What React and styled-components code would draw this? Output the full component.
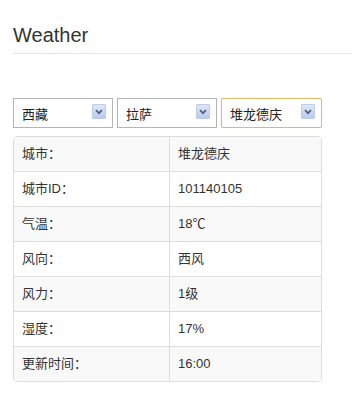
import React from 'react';
import styled, { createGlobalStyle } from 'styled-components';

const GlobalStyle = createGlobalStyle`
  html, body {
    margin: 0;
    padding: 0;
    background: #fff;
  }
  body {
    font-family: "Liberation Sans", Arial, "Noto Sans CJK SC", sans-serif;
    font-size: 13px;
    color: #333;
  }
`;

const Page = styled.div`
  padding: 20px 0 0 13px;
  width: 339px;
`;

const Header = styled.h2`
  margin: 0;
  padding-bottom: 3px;
  font-size: 20px;
  line-height: 30px;
  font-weight: normal;
  color: #333;
  border-bottom: 1px solid #e5e5e5;
`;

const SelectRow = styled.div`
  display: flex;
  gap: 4px;
  margin-top: 44px;
  margin-bottom: 8px;
`;

const SelectBox = styled.div`
  position: relative;
  box-sizing: border-box;
  width: ${(p) => p.w}px;
  height: 30px;
  border: 1px solid ${(p) => (p.focused ? '#dcbc6a' : '#b4b4b4')};
  border-radius: ${(p) => (p.focused ? '2px' : '0')};
  box-shadow: ${(p) => (p.focused ? '0 0 1px rgba(220,180,90,0.6)' : 'none')};
  background: #fff;
  display: flex;
  align-items: center;
  padding-left: 8px;
  font-size: 13px;
  color: #222;
`;

const Arrow = styled.span`
  position: absolute;
  right: 6px;
  top: 5px;
  width: 14px;
  height: 15px;
  box-sizing: border-box;
  border: 1px solid #bccbe8;
  border-radius: 1px;
  background: linear-gradient(#dfe7f7, #b9cbef);
  display: flex;
  align-items: center;
  justify-content: center;
`;

const Table = styled.div`
  box-sizing: border-box;
  width: 309px;
  border: 1px solid #dddddd;
  border-radius: 4px;
  overflow: hidden;
`;

const Row = styled.div`
  display: grid;
  grid-template-columns: 155px 1fr;
  background: ${(p) => (p.striped ? '#f9f9f9' : '#fff')};
  border-top: ${(p) => (p.first ? 'none' : '1px solid #dddddd')};
`;

const Cell = styled.div`
  padding: 8px 8px;
  line-height: 18px;
  font-size: 13px;
  color: #333;
  border-left: ${(p) => (p.divider ? '1px solid #dddddd' : 'none')};
`;

function Select({ value, w, focused }) {
  return (
    <SelectBox w={w} focused={focused}>
      {value}
      <Arrow>
        <svg width="8" height="6" viewBox="0 0 8 6">
          <path d="M1 1.2 L4 4.2 L7 1.2" fill="none" stroke="#4d6185" strokeWidth="1.8" />
        </svg>
      </Arrow>
    </SelectBox>
  );
}

const rows = [
  ['城市：', '堆龙德庆'],
  ['城市ID：', '101140105'],
  ['气温：', '18℃'],
  ['风向：', '西风'],
  ['风力：', '1级'],
  ['湿度：', '17%'],
  ['更新时间：', '16:00'],
];

export default function App() {
  return (
    <>
      <GlobalStyle />
      <Page>
        <Header>Weather</Header>
        <SelectRow>
          <Select value="西藏" w={100} />
          <Select value="拉萨" w={100} />
          <Select value="堆龙德庆" w={101} focused />
        </SelectRow>
        <Table>
          {rows.map(([label, value], i) => (
            <Row key={label} first={i === 0} striped={i % 2 === 0}>
              <Cell>{label}</Cell>
              <Cell divider>{value}</Cell>
            </Row>
          ))}
        </Table>
      </Page>
    </>
  );
}
